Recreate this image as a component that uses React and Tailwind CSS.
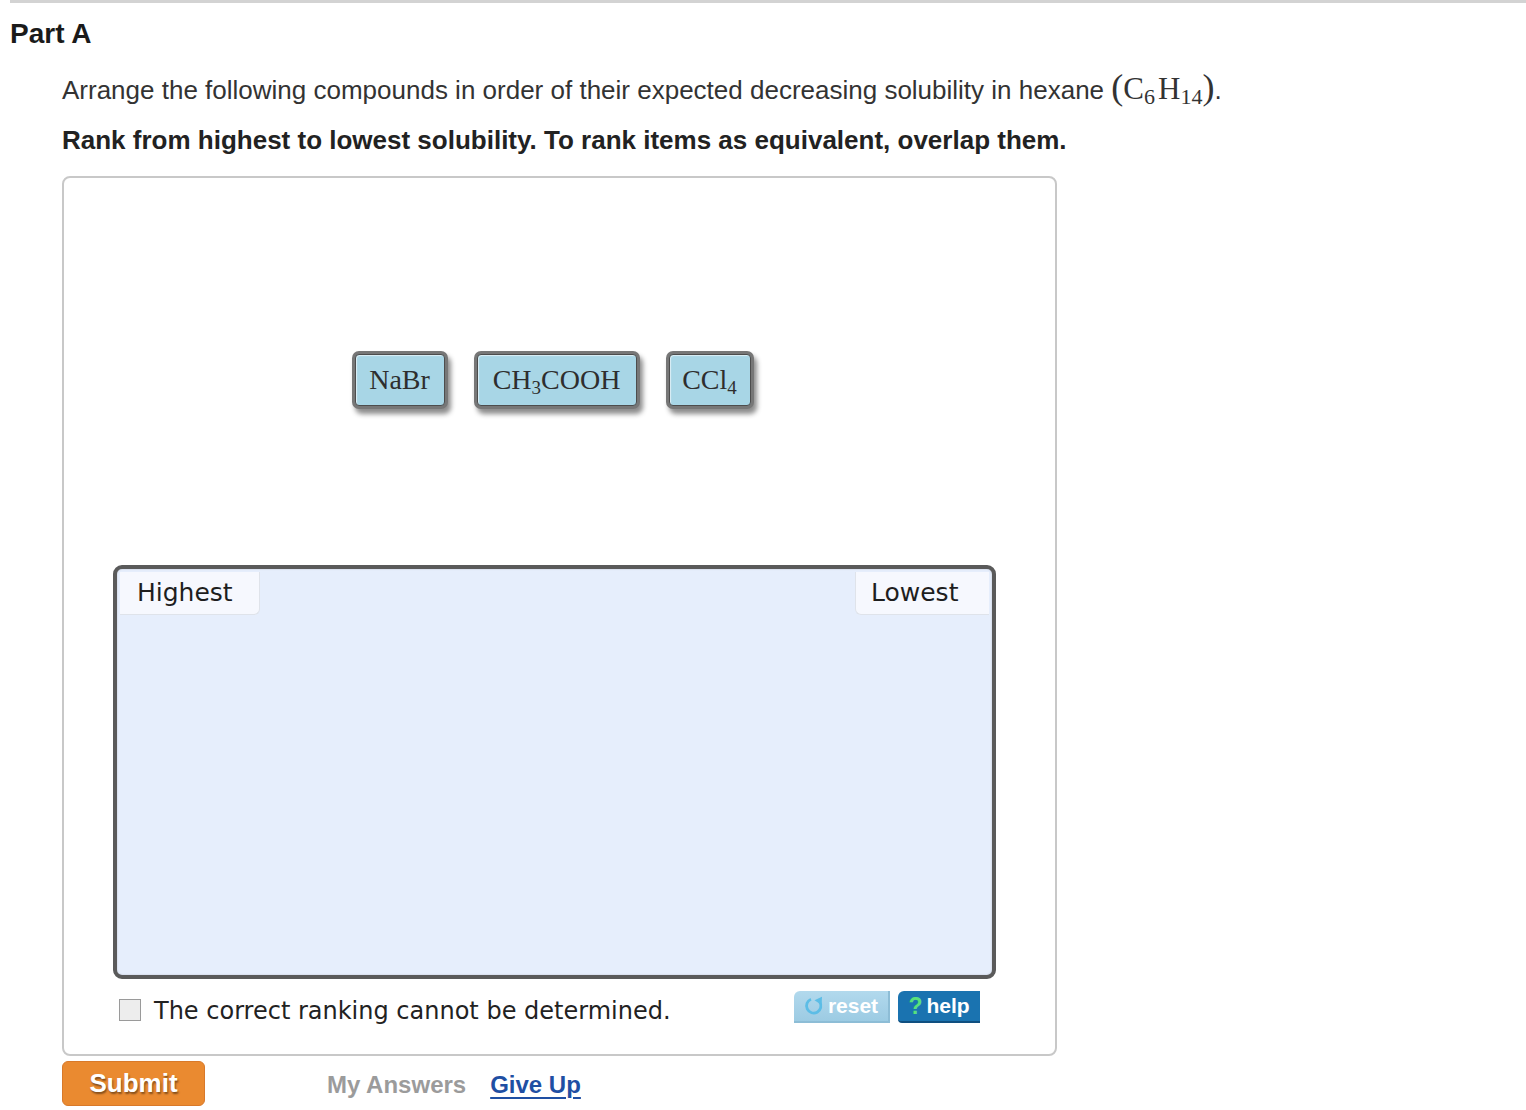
import React from 'react';

const sans = { fontFamily: '"Liberation Sans", Arial, sans-serif' };
const serif = { fontFamily: '"Liberation Serif", "Times New Roman", serif' };
const verdana = { fontFamily: '"DejaVu Sans", Verdana, sans-serif' };

// draggable compound chip
const Chip = ({ children, width }) => (
  <div
    className={`${width} h-[58px] rounded-[7px] bg-[#777] p-[3px] shadow-[3px_5px_5px_rgba(0,0,0,0.45)]`}
  >
    <div
      className="w-full h-full rounded-[4px] bg-[#a8d6e6] border border-[#4d4d4d] shadow-[inset_1px_1px_1px_rgba(255,255,255,0.6)] flex items-center justify-center text-[28px] leading-[30px] text-[#2e2e2e]"
      style={serif}
    >
      {children}
    </div>
  </div>
);

const ResetIcon = () => (
  <svg width="20" height="20" viewBox="0 0 20 20" fill="none">
    <path d="M7 3.2 A7.2 7.2 0 1 0 15.8 6" stroke="#5cbde6" strokeWidth="2.8" fill="none" />
    <path d="M10.5 4.2 L18 0.8 L17.6 9 Z" fill="#5cbde6" />
  </svg>
);

export default function App() {
  return (
    <div className="w-[1526px] h-[1110px] bg-white overflow-hidden" style={sans}>
      {/* top rule */}
      <div className="ml-[10px] h-[3px] bg-[#d3d3d3]" />

      <h2 className="ml-[10px] mt-[16px] text-[28px] leading-[30px] font-bold text-[#1a1a1a]">Part A</h2>

      <div className="pl-[62px]">
        <p className="mt-[23px] text-[26px] leading-[36px] text-[#333]">
          Arrange the following compounds in order of their expected decreasing solubility in hexane{' '}
          <span className="text-[31px] leading-[0] text-[#333]" style={serif}>
            <span className="text-[36px]">(</span>C<span className="text-[22px] align-[-5px] mr-[3px]">6</span>H<span className="text-[22px] align-[-5px]">14</span><span className="text-[36px]">)</span>
          </span>
          .
        </p>
        <p className="mt-[17px] text-[26px] leading-[30px] font-bold text-[#222]">
          Rank from highest to lowest solubility. To rank items as equivalent, overlap them.
        </p>

        {/* ranking widget */}
        <div className="mt-[21px] w-[995px] h-[880px] border-2 border-[#c8c8c8] rounded-[8px] pl-[49px] pt-[173px]">
          <div className="w-[883px] flex justify-center gap-[26px] pr-[4px]">
            <Chip width="w-[96px]">NaBr</Chip>
            <Chip width="w-[166px]">
              <span>
                CH<span className="text-[19px] leading-[0] align-[-5px]">3</span>COOH
              </span>
            </Chip>
            <Chip width="w-[88px]">
              <span>
                CCl<span className="text-[19px] leading-[0] align-[-5px]">4</span>
              </span>
            </Chip>
          </div>

          <div className="mt-[156px] w-[883px] h-[414px] rounded-[9px] border-4 border-[#5a5a5a] bg-[#e6eefc] shadow-[inset_0_0_2px_rgba(0,0,0,0.2)] p-[3px] flex justify-between items-start" style={verdana}>
            <div className="w-[140px] h-[43px] bg-[#f6f8fe] rounded-br-[6px] border-r border-b border-[#dfe3ea] pl-[17px] flex items-center text-[25px] text-[#1e1e1e]">
              Highest
            </div>
            <div className="w-[134px] h-[43px] bg-[#f6f8fe] rounded-bl-[6px] border-l border-b border-[#dfe3ea] pl-[15px] flex items-center text-[25px] text-[#1e1e1e]">
              Lowest
            </div>
          </div>

          <div className="w-[883px] mt-[12px] flex items-start">
            <div className="mt-[8px] ml-[6px] w-[22px] h-[22px] border border-[#9a9a9a] bg-[#ededed] shrink-0" />
            <span className="mt-[6px] ml-[13px] text-[24px] leading-[28px] text-[#222]" style={verdana}>
              The correct ranking cannot be determined.
            </span>
            <div className="ml-auto mr-[16px] flex gap-[8px]">
              <div className="w-[96px] h-[32px] bg-gradient-to-b from-[#b2d9ed] to-[#9ccbe3] border-b-2 border-r-2 border-[#8dbdd6] rounded-tl-[6px] flex items-center justify-center gap-[4px] text-white font-bold text-[21px]">
                <ResetIcon />
                <span>reset</span>
              </div>
              <div className="w-[82px] h-[32px] bg-[#1a73b0] border-b-2 border-[#0f4f80] rounded-tl-[6px] rounded-bl-[4px] flex items-center justify-center gap-[4px] font-bold text-[21px]">
                <span className="text-[#58e07c] text-[23px]">?</span>
                <span className="text-white">help</span>
              </div>
            </div>
          </div>
        </div>

        {/* footer actions */}
        <div className="mt-[5px] flex items-center">
          <div className="w-[143px] h-[45px] rounded-[6px] bg-[#ea8a30] border border-[#d8792a] flex items-center justify-center text-white font-bold text-[26px] [text-shadow:1px_2px_2px_rgba(0,0,0,0.45)]">
            Submit
          </div>
          <span className="ml-[122px] mt-[2px] text-[24px] font-bold text-[#9b9b9b]">My Answers</span>
          <span className="ml-[24px] mt-[2px] text-[24px] font-bold text-[#1f4fa3] underline decoration-2 underline-offset-[4px]">Give Up</span>
        </div>
      </div>
    </div>
  );
}
